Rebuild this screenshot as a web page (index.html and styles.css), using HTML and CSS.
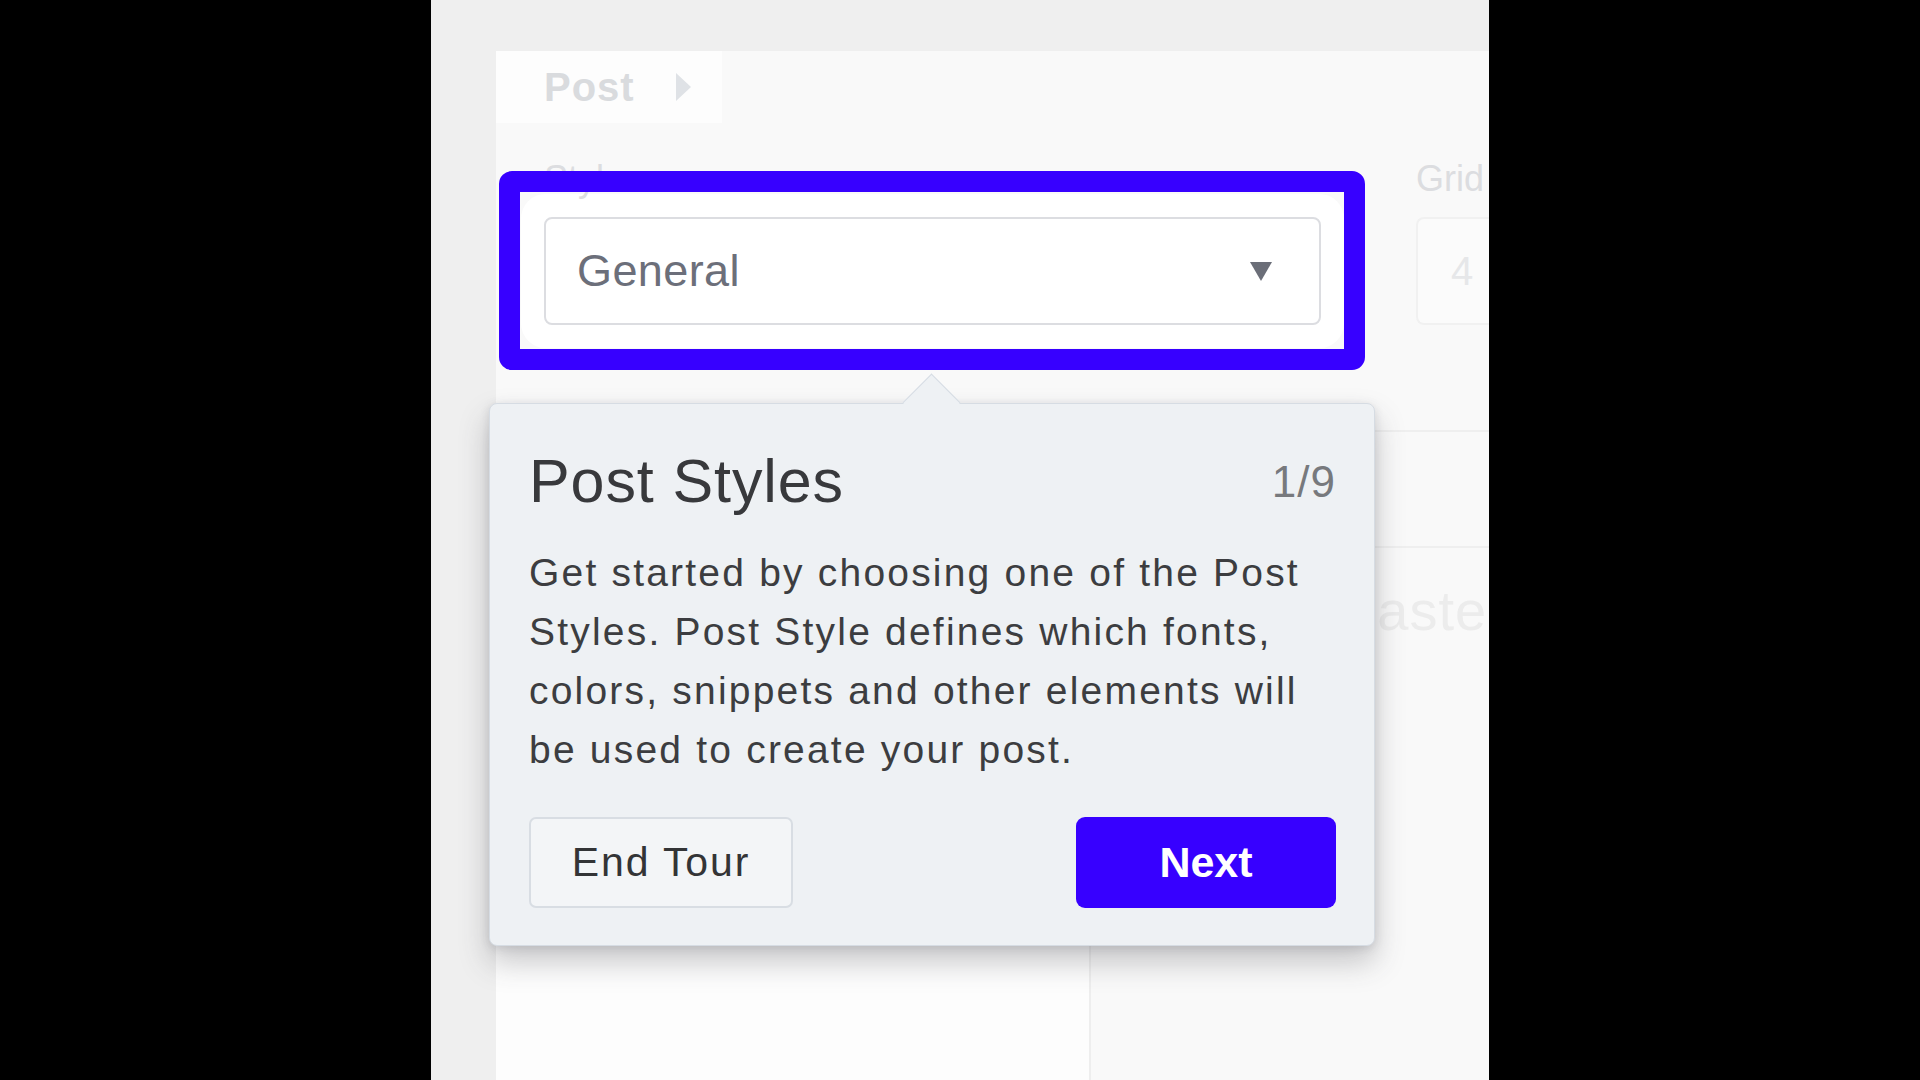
FILE: index.html
```html
<!DOCTYPE html>
<html lang="en">
<head>
<meta charset="utf-8">
<title>Post Styles tour</title>
<link rel="stylesheet" href="styles.css">
</head>
<body>
<div class="frame">
  <div class="content">
    <div class="tabbar">
      <div class="tab">
        <span class="tab-label">Post</span>
        <svg class="tab-arrow" width="15" height="28" viewBox="0 0 15 28"><path d="M0 0 L15 14 L0 28 Z" fill="#dfe2e6"/></svg>
      </div>
    </div>
    <div class="form">
      <div class="field field-style">
        <div class="label">Style</div>
        <div class="select">
          <span class="select-value">General</span>
          <svg class="caret" width="22" height="19" viewBox="0 0 22 19"><path d="M0 0 L22 0 L11 19 Z" fill="#6b6e78"/></svg>
        </div>
      </div>
      <div class="field field-grid">
        <div class="label">Grid</div>
        <div class="input"><span>4</span></div>
      </div>
    </div>
    <div class="section">
      <div class="section-head"></div>
      <div class="section-body"><span class="placeholder">Paste</span></div>
    </div>
    <div class="bottom">
      <div class="bottom-left"></div>
      <div class="bottom-right"></div>
    </div>
  </div>

  <div class="spot"></div>

  <div class="popover">
    <div class="pop-head">
      <h2 class="pop-title">Post Styles</h2>
      <span class="pop-count">1/9</span>
    </div>
    <p class="pop-text">Get started by choosing one of the Post Styles. Post Style defines which fonts, colors, snippets and other elements will be used to create your post.</p>
    <div class="pop-actions">
      <button class="btn btn-end">End Tour</button>
      <button class="btn btn-next">Next</button>
    </div>
  </div>
</div>
</body>
</html>
```
FILE: styles.css
```css
html, body {
  margin: 0;
  padding: 0;
  background: #000;
  height: 1080px;
  overflow: hidden;
  font-family: "Liberation Sans", Arial, sans-serif;
}

.frame {
  position: relative;
  width: 1058px;
  height: 1080px;
  margin-left: 431px;
  background: #efefef;
  overflow: hidden;
  padding: 51px 0 0 65px;
  box-sizing: border-box;
}

.content {
  background: #f9f9f9;
  height: 100%;
  display: flex;
  flex-direction: column;
}

.tabbar {
  display: flex;
  height: 72px;
  flex: none;
}

.tab {
  width: 226px;
  background: #fdfdfd;
  display: flex;
  align-items: center;
  padding-left: 48px;
  gap: 41px;
  box-sizing: border-box;
}

.tab-label {
  font-size: 40px;
  font-weight: 700;
  letter-spacing: 1px;
  color: #d9dbde;
}

.form {
  display: flex;
  gap: 95px;
  padding: 36px 0 0 48px;
  flex: none;
}

.label {
  font-size: 36px;
  line-height: 40px;
  height: 40px;
  color: #dcdde0;
  margin-bottom: 18px;
}

.field-style {
  width: 777px;
  flex: none;
}

.field-grid {
  width: 260px;
  flex: none;
}

.select {
  height: 108px;
  box-sizing: border-box;
  border: 2px solid #dcdde1;
  border-radius: 8px;
  background: #fff;
  box-shadow: 0 0 0 23px #fff;
  display: flex;
  align-items: center;
  justify-content: space-between;
  padding: 0 47px 0 31px;
}

.select-value {
  font-size: 45px;
  letter-spacing: 0.4px;
  color: #6c6f7a;
}

.input {
  height: 108px;
  box-sizing: border-box;
  border: 2px solid #f1f1f1;
  border-right: none;
  border-radius: 8px 0 0 8px;
  background: #fbfbfb;
  display: flex;
  align-items: center;
  padding-left: 33px;
}

.input span {
  font-size: 40px;
  color: #e6e7e9;
}

.section {
  margin: 105px 0 0 0;
  flex: none;
}

.section-head {
  height: 114px;
  border-top: 2px solid #efefef;
  border-bottom: 2px solid #efefef;
}

.section-body {
  height: 124px;
  display: flex;
  align-items: center;
  padding-left: 843px;
}

.placeholder {
  font-size: 56px;
  color: #ececec;
  letter-spacing: 1px;
}

.bottom {
  flex: 1;
  display: flex;
  margin-top: 206px;
}

.bottom-left {
  width: 593px;
  background: #fdfdfd;
}

.bottom-right {
  flex: 1;
  border-left: 2px solid #eeeeee;
}

/* Tour overlays */
.spot {
  position: absolute;
  left: 68px;
  top: 171px;
  width: 866px;
  height: 199px;
  box-sizing: border-box;
  border: 21px solid #3700ff;
  border-radius: 13px;
  z-index: 2;
}

.popover {
  position: absolute;
  left: 58px;
  top: 403px;
  width: 886px;
  box-sizing: border-box;
  background: #eef1f4;
  border: 1px solid #d6dce3;
  border-radius: 8px;
  padding: 41px 38px 37px 39px;
  box-shadow: 0 16px 30px rgba(60, 60, 70, 0.28), 0 2px 10px rgba(60, 60, 70, 0.14);
  z-index: 3;
}

.popover::before {
  content: "";
  position: absolute;
  left: 421px;
  top: -22px;
  width: 41px;
  height: 41px;
  background: #eef1f4;
  border-top: 1px solid #d6dce3;
  border-left: 1px solid #d6dce3;
  transform: rotate(45deg);
  box-sizing: border-box;
}

.pop-head {
  display: flex;
  justify-content: space-between;
  align-items: center;
  height: 73px;
  position: relative;
}

.pop-title {
  margin: 0;
  font-size: 61px;
  line-height: 73px;
  font-weight: 400;
  letter-spacing: 0.9px;
  color: #38393c;
}

.pop-count {
  font-size: 44px;
  line-height: 52px;
  letter-spacing: 1px;
  color: #77797d;
}

.pop-text {
  margin: 25px 0 0 0;
  font-size: 39px;
  line-height: 59px;
  letter-spacing: 2.2px;
  color: #3c3d40;
  position: relative;
}

.pop-actions {
  display: flex;
  justify-content: space-between;
  margin-top: 38px;
}

.btn {
  height: 91px;
  box-sizing: border-box;
  font-family: "Liberation Sans", Arial, sans-serif;
  cursor: pointer;
  padding: 0;
}

.btn-end {
  width: 264px;
  border: 2px solid #d8dde3;
  border-radius: 7px;
  background: #f3f5f7;
  font-size: 41px;
  letter-spacing: 1.9px;
  color: #333436;
}

.btn-next {
  width: 260px;
  border: none;
  border-radius: 9px;
  background: #3700ff;
  font-size: 43px;
  font-weight: 700;
  color: #fff;
}
```
